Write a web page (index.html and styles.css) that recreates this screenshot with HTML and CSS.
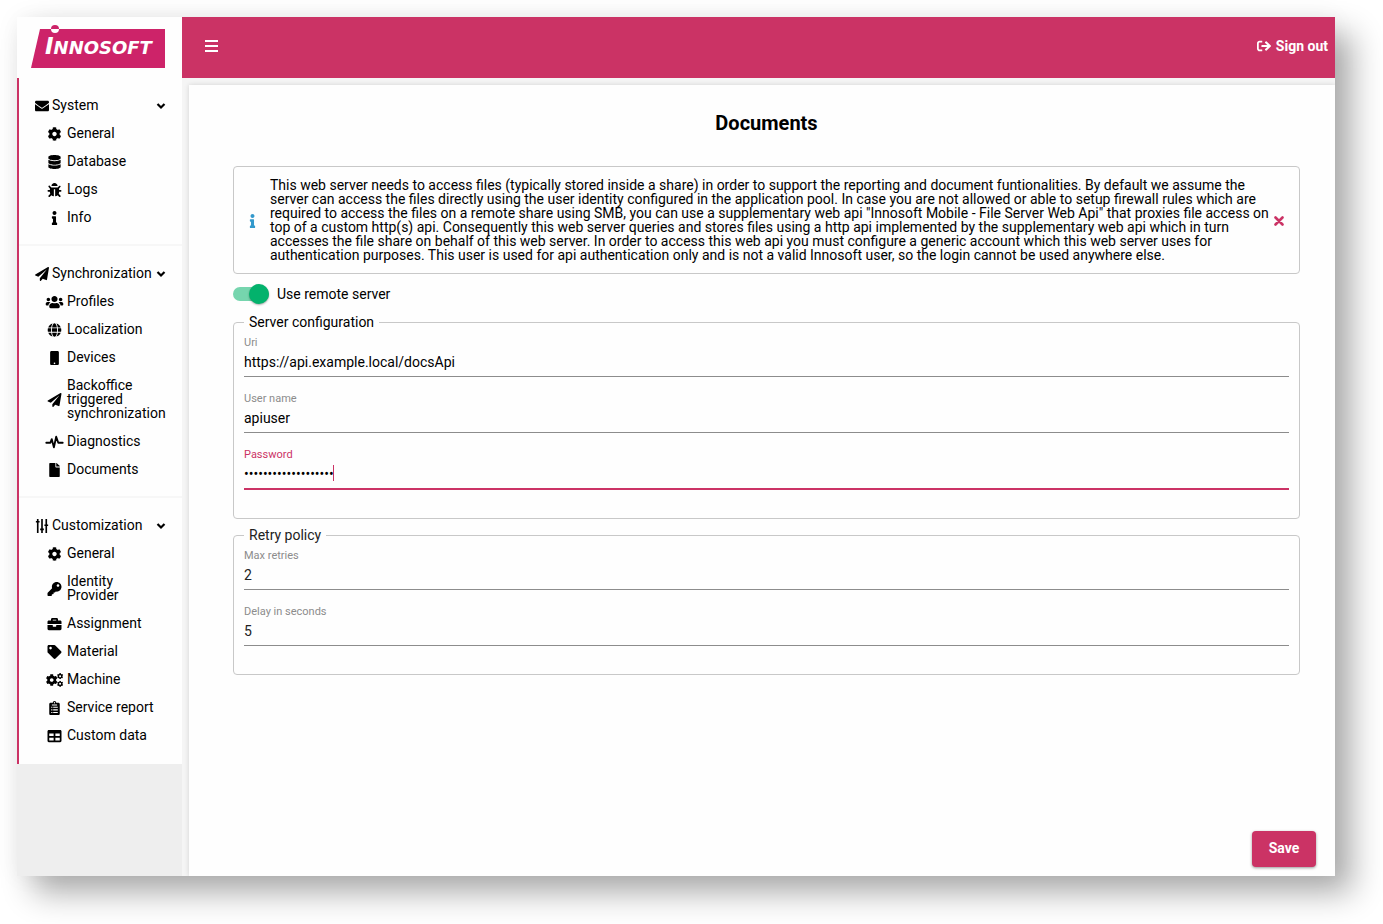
FILE: index.html
```html
<!DOCTYPE html>
<html lang="en">
<head>
<meta charset="utf-8">
<title>Documents</title>
<link rel="stylesheet" href="styles.css">
</head>
<body>
<svg class="sprite" aria-hidden="true">
  <symbol id="envelope" viewBox="0 0 512 512"><path d="M502.300 190.800c3.900-3.100 9.700-.2 9.700 4.700V400c0 26.500-21.500 48-48 48H48c-26.500 0-48-21.500-48-48V195.600c0-5 5.700-7.800 9.700-4.700 22.400 17.400 52.100 39.500 154.100 113.600 21.100 15.400 56.700 47.800 92.200 47.600 35.700.3 72-32.800 92.300-47.600 102-74.100 131.600-96.300 154-113.700zM256 320c23.200.4 56.600-29.200 73.400-41.400 132.700-96.300 142.800-104.700 173.400-128.700 5.800-4.500 9.200-11.500 9.200-18.900v-19c0-26.500-21.500-48-48-48H48c-26.500 0-48 21.500-48 48v19c0 7.400 3.400 14.300 9.200 18.900 30.600 23.900 40.700 32.400 173.400 128.700 16.800 12.200 50.200 41.800 73.400 41.400z"/></symbol>
  <symbol id="cog" viewBox="0 0 512 512"><path d="M487.400 315.700l-42.600-24.600c4.300-23.200 4.300-47 0-70.200l42.600-24.600c4.900-2.800 7.100-8.600 5.500-14-11.100-35.600-30-67.800-54.700-94.600-3.800-4.100-10-5.100-14.800-2.300L380.800 110c-17.900-15.400-38.500-27.300-60.800-35.100V25.800c0-5.600-3.900-10.500-9.400-11.700-36.700-8.200-74.300-7.800-109.200 0-5.500 1.200-9.400 6.100-9.400 11.700V75c-22.200 7.900-42.800 19.800-60.800 35.100L88.700 85.500c-4.900-2.800-11-1.900-14.800 2.300-24.700 26.700-43.600 58.900-54.700 94.600-1.700 5.400.6 11.200 5.500 14L67.300 221c-4.300 23.200-4.300 47 0 70.200l-42.600 24.600c-4.900 2.800-7.100 8.600-5.500 14 11.100 35.600 30 67.800 54.700 94.600 3.800 4.100 10 5.100 14.800 2.300l42.600-24.600c17.900 15.400 38.500 27.300 60.800 35.100v49.200c0 5.600 3.900 10.500 9.400 11.700 36.700 8.200 74.300 7.800 109.200 0 5.500-1.200 9.400-6.100 9.400-11.700v-49.200c22.200-7.900 42.800-19.800 60.800-35.100l42.600 24.600c4.900 2.800 11 1.900 14.800-2.300 24.700-26.700 43.600-58.900 54.700-94.600 1.500-5.500-.7-11.300-5.600-14.100zM256 336c-44.100 0-80-35.900-80-80s35.900-80 80-80 80 35.900 80 80-35.900 80-80 80z"/></symbol>
  <symbol id="database" viewBox="0 0 448 512"><path d="M448 73.100v45.800C448 159.100 347.700 192 224 192S0 159.100 0 118.900V73.100C0 32.900 100.300 0 224 0s224 32.900 224 73.100zM448 176v102.900C448 319.100 347.700 352 224 352S0 319.100 0 278.900V176c48.100 33.100 136.200 48.600 224 48.600S399.900 209.100 448 176zm0 160v102.900C448 479.100 347.700 512 224 512S0 479.100 0 438.900V336c48.100 33.100 136.200 48.600 224 48.600S399.900 369.100 448 336z"/></symbol>
  <symbol id="bug" viewBox="0 0 512 512"><path d="M511.988 288.900c-.478 17.430-15.217 31.100-32.653 31.100H424v16c0 21.864-4.882 42.584-13.600 61.145l60.228 60.228c12.496 12.497 12.496 32.758 0 45.255-12.498 12.497-32.759 12.496-45.256 0l-54.736-54.736C345.886 467.965 314.351 480 280 480V236c0-6.627-5.373-12-12-12h-24c-6.627 0-12 5.373-12 12v244c-34.351 0-65.886-12.035-90.636-32.108l-54.736 54.736c-12.498 12.497-32.759 12.496-45.256 0-12.496-12.497-12.496-32.758 0-45.255l60.228-60.228C92.882 378.584 88 357.864 88 336v-16H32.666C15.230 320 .491 306.330.013 288.900-.484 270.816 14.028 256 32 256h56v-58.745l-46.628-46.628c-12.496-12.497-12.496-32.758 0-45.255 12.498-12.497 32.758-12.497 45.256 0L141.255 160h229.489l54.627-54.627c12.498-12.497 32.758-12.497 45.256 0 12.496 12.497 12.496 32.758 0 45.255L424 197.255V256h56c17.972 0 32.484 14.816 31.988 32.900zM257 0c-61.856 0-112 50.144-112 112h224C369 50.144 318.856 0 257 0z"/></symbol>
  <symbol id="info" viewBox="0 0 192 512"><path d="M20 424.200h20V279.800H20c-11 0-20-9-20-20V212c0-11 9-20 20-20h112c11 0 20 9 20 20v212.200h20c11 0 20 9 20 20V492c0 11-9 20-20 20H20c-11 0-20-9-20-20v-47.800c0-11 9-20 20-20zM96 0C56.200 0 24 32.200 24 72s32.200 72 72 72 72-32.200 72-72S135.800 0 96 0z"/></symbol>
  <symbol id="plane" viewBox="0 0 512 512"><path d="M476 3.200L12.500 270.600c-18.100 10.400-15.800 35.600 2.200 43.200L121 358.400l287.300-253.200c5.500-4.900 13.300 2.600 8.600 8.300L176 407v80.500c0 23.600 28.500 32.900 42.500 15.800L282 426l124.600 52.200c14.200 6 30.400-2.900 33-18.200l72-432C515 7.800 493.300-6.800 476 3.200z"/></symbol>
  <symbol id="users" viewBox="0 0 640 512"><path d="M96 224c35.300 0 64-28.700 64-64s-28.700-64-64-64-64 28.700-64 64 28.700 64 64 64zm448 0c35.300 0 64-28.700 64-64s-28.700-64-64-64-64 28.700-64 64 28.700 64 64 64zm32 32h-64c-17.600 0-33.500 7.100-45.100 18.600 40.300 22.100 68.900 62 75.100 109.400h66c17.700 0 32-14.300 32-32v-32c0-35.300-28.700-64-64-64zm-256 0c61.900 0 112-50.100 112-112S381.900 32 320 32 208 82.100 208 144s50.100 112 112 112zm76.800 32h-8.300c-20.800 10-43.900 16-68.500 16s-47.600-6-68.500-16h-8.300C179.600 288 128 339.600 128 403.200V432c0 26.500 21.500 48 48 48h288c26.500 0 48-21.500 48-48v-28.800c0-63.600-51.600-115.200-115.200-115.200zm-223.700-13.400C161.500 263.100 145.600 256 128 256H64c-35.300 0-64 28.700-64 64v32c0 17.700 14.300 32 32 32h65.900c6.300-47.400 34.900-87.300 75.200-109.400z"/></symbol>
  <symbol id="globe" viewBox="0 0 496 512"><path d="M336.500 160C322 70.700 287.800 8 248 8s-74 62.700-88.500 152h177zM152 256c0 22.200 1.200 43.500 3.300 64h185.300c2.100-20.500 3.300-41.800 3.300-64s-1.200-43.500-3.300-64H155.300c-2.100 20.500-3.300 41.800-3.300 64zm324.700-96c-28.600-67.900-86.500-120.400-158-141.600 24.400 33.800 41.200 84.700 50 141.600h108zM177.200 18.400C105.800 39.600 47.800 92.100 19.300 160h108c8.700-56.900 25.500-107.800 49.900-141.600zM487.400 192H372.700c2.100 21 3.300 42.500 3.300 64s-1.200 43-3.300 64h114.600c5.500-20.500 8.600-41.800 8.600-64s-3.100-43.500-8.500-64zM120 256c0-21.500 1.200-43 3.300-64H8.600C3.200 212.500 0 233.800 0 256s3.200 43.500 8.600 64h114.600c-2-21-3.200-42.500-3.200-64zm39.500 96c14.500 89.300 48.700 152 88.500 152s74-62.700 88.500-152h-177zm159.300 141.600c71.400-21.200 129.400-73.700 158-141.600h-108c-8.800 56.900-25.600 107.800-50 141.600zM19.300 352c28.600 67.900 86.500 120.400 158 141.600-24.400-33.800-41.200-84.700-50-141.600h-108z"/></symbol>
  <symbol id="mobile" viewBox="0 0 320 512"><path d="M272 0H48C21.500 0 0 21.500 0 48v416c0 26.500 21.500 48 48 48h224c26.500 0 48-21.500 48-48V48c0-26.500-21.500-48-48-48zM160 480c-17.700 0-32-14.300-32-32s14.300-32 32-32 32 14.300 32 32-14.300 32-32 32z"/></symbol>
  <symbol id="pulse" viewBox="0 0 640 512"><path d="M20 282h150l50-130 78 300 84-390 76 220h162" fill="none" stroke="currentColor" stroke-width="68" stroke-linejoin="round" stroke-linecap="round"/></symbol>
  <symbol id="file" viewBox="0 0 384 512"><path d="M224 136V0H24C10.700 0 0 10.700 0 24v464c0 13.300 10.700 24 24 24h336c13.300 0 24-10.700 24-24V160H248c-13.200 0-24-10.800-24-24zm160-14.100v6.100H256V0h6.100c6.400 0 12.500 2.500 17 7l97.900 98c4.500 4.500 7 10.600 7 16.900z"/></symbol>
  <symbol id="sliders" viewBox="0 0 448 512"><path d="M38 0h60v72h38v60H98v380H38V132H0V72h38zM194 0h60v348h38v60h-38v104h-60V408h-38v-60h38zM350 0h60v200h38v60h-38v252h-60V260h-38v-60h38z"/></symbol>
  <symbol id="key" viewBox="0 0 512 512"><path d="M512 176.001C512 273.203 433.202 352 336 352c-11.220 0-22.190-1.062-32.827-3.069l-24.012 27.014A23.999 23.999 0 0 1 261.223 384H224v40c0 13.255-10.745 24-24 24h-40v40c0 13.255-10.745 24-24 24H24c-13.255 0-24-10.745-24-24v-78.059c0-6.365 2.529-12.470 7.029-16.971l161.802-161.802C163.108 213.814 160 195.271 160 176 160 78.798 238.797.001 335.999 0 433.488-.001 512 78.511 512 176.001zM336 128c0 26.510 21.490 48 48 48s48-21.490 48-48-21.490-48-48-48-48 21.490-48 48z"/></symbol>
  <symbol id="toolbox" viewBox="0 0 512 512"><path d="M320 336c0 8.840-7.160 16-16 16h-96c-8.840 0-16-7.160-16-16v-48H0v144c0 25.600 22.400 48 48 48h416c25.600 0 48-22.400 48-48V288H320v48zm144-208h-80V80c0-25.600-22.400-48-48-48H176c-25.600 0-48 22.400-48 48v48H48c-25.600 0-48 22.400-48 48v80h512v-80c0-25.600-22.400-48-48-48zm-144 0H192V96h128v32z"/></symbol>
  <symbol id="tag" viewBox="0 0 512 512"><path d="M0 252.118V48C0 21.490 21.490 0 48 0h204.118a48 48 0 0 1 33.941 14.059l211.882 211.882c18.745 18.745 18.745 49.137 0 67.882L293.823 497.941c-18.745 18.745-49.137 18.745-67.882 0L14.059 286.059A48 48 0 0 1 0 252.118zM112 64c-26.510 0-48 21.490-48 48s21.490 48 48 48 48-21.490 48-48-21.490-48-48-48z"/></symbol>
  <symbol id="clipboard" viewBox="0 0 384 512"><path fill-rule="evenodd" d="M336 64h-80a64 64 0 0 0-128 0H48C21 64 0 85 0 112v352c0 27 21 48 48 48h288c27 0 48-21 48-48V112c0-27-21-48-48-48zM192 40a24 24 0 1 1 0 48 24 24 0 0 1 0-48zM96 128h192v32H96zM72 208h44v40H72zm72 0h168v40H144zM72 304h44v40H72zm72 0h168v40H144zM72 400h44v40H72zm72 0h168v40H144z"/></symbol>
  <symbol id="table" viewBox="0 0 512 512"><path d="M464 32H48C21.490 32 0 53.490 0 80v352c0 26.510 21.490 48 48 48h416c26.510 0 48-21.490 48-48V80c0-26.510-21.490-48-48-48zM224 416H64v-96h160v96zm0-160H64v-96h160v96zm224 160H288v-96h160v96zm0-160H288v-96h160v96z"/></symbol>
  <symbol id="cogs" viewBox="0 0 640 512">
    <svg x="0" y="38" width="436" height="436" viewBox="0 0 512 512"><use href="#cog"/></svg>
    <svg x="410" y="0" width="230" height="230" viewBox="0 0 512 512"><use href="#cog"/></svg>
    <svg x="410" y="282" width="230" height="230" viewBox="0 0 512 512"><use href="#cog"/></svg>
  </symbol>
  <symbol id="chevron" viewBox="0 0 10 10"><path d="M1.500 3l3.500 3.500L8.500 3" fill="none" stroke="currentColor" stroke-width="2.200"/></symbol>
  <symbol id="bars" viewBox="0 0 13 12"><path d="M0 0h13v2H0zM0 5h13v2H0zM0 10h13v2H0z"/></symbol>
  <symbol id="signout" viewBox="0 0 512 512"><path d="M180 448H96c-53 0-96-43-96-96V160c0-53 43-96 96-96h84c6.600 0 12 5.400 12 12v40c0 6.600-5.400 12-12 12H96c-17.700 0-32 14.300-32 32v192c0 17.700 14.300 32 32 32h84c6.600 0 12 5.400 12 12v40c0 6.600-5.400 12-12 12zm117.900-303.100l77.600 71.100H184c-13.300 0-24 10.700-24 24v32c0 13.300 10.700 24 24 24h191.500l-77.600 71.100c-10.100 9.200-10.400 25-.8 34.700l21.900 21.900c9.300 9.300 24.500 9.400 33.900.1l152-150.800c9.500-9.400 9.500-24.700 0-34.100L353 88.300c-9.400-9.300-24.500-9.300-33.900.1l-21.900 21.900c-9.700 9.600-9.300 25.400.7 34.600z"/></symbol>
  <symbol id="times" viewBox="0 0 10 10"><path d="M1.500 1.500l7 7M8.500 1.500l-7 7" fill="none" stroke="currentColor" stroke-width="2.600" stroke-linecap="round"/></symbol>
</svg>

<div class="app">
  <aside class="sidebar">
    <div class="brand">
      <svg class="logo" viewBox="0 0 134 43" role="img" aria-label="Innosoft">
        <path class="logo-fill" d="M9 4h125v39H0z"/>
        <circle class="logo-light" cx="24" cy="4" r="4"/>
        <path class="logo-fill" d="M20 4a4 4 0 0 1 8 0z"/>
        <text class="logo-text" x="14" y="29"><tspan class="logo-initial">I</tspan>NNOSOFT</text>
      </svg>
    </div>
    <nav class="menu">
      <section class="group">
        <button class="group-head" type="button"><svg class="icon"><use href="#envelope"/></svg><span class="group-name">System</span><svg class="chevron"><use href="#chevron"/></svg></button>
        <a class="item" href="#"><svg class="icon"><use href="#cog"/></svg><span>General</span></a>
        <a class="item" href="#"><svg class="icon"><use href="#database"/></svg><span>Database</span></a>
        <a class="item" href="#"><svg class="icon"><use href="#bug"/></svg><span>Logs</span></a>
        <a class="item" href="#"><svg class="icon"><use href="#info"/></svg><span>Info</span></a>
      </section>
      <section class="group">
        <button class="group-head" type="button"><svg class="icon"><use href="#plane"/></svg><span class="group-name">Synchronization</span><svg class="chevron"><use href="#chevron"/></svg></button>
        <a class="item" href="#"><svg class="icon"><use href="#users"/></svg><span>Profiles</span></a>
        <a class="item" href="#"><svg class="icon"><use href="#globe"/></svg><span>Localization</span></a>
        <a class="item" href="#"><svg class="icon"><use href="#mobile"/></svg><span>Devices</span></a>
        <a class="item" href="#"><svg class="icon"><use href="#plane"/></svg><span>Backoffice triggered synchronization</span></a>
        <a class="item" href="#"><svg class="icon"><use href="#pulse"/></svg><span>Diagnostics</span></a>
        <a class="item" href="#"><svg class="icon"><use href="#file"/></svg><span>Documents</span></a>
      </section>
      <section class="group">
        <button class="group-head" type="button"><svg class="icon"><use href="#sliders"/></svg><span class="group-name">Customization</span><svg class="chevron"><use href="#chevron"/></svg></button>
        <a class="item" href="#"><svg class="icon"><use href="#cog"/></svg><span>General</span></a>
        <a class="item" href="#"><svg class="icon"><use href="#key"/></svg><span>Identity Provider</span></a>
        <a class="item" href="#"><svg class="icon"><use href="#toolbox"/></svg><span>Assignment</span></a>
        <a class="item" href="#"><svg class="icon"><use href="#tag"/></svg><span>Material</span></a>
        <a class="item" href="#"><svg class="icon"><use href="#cogs"/></svg><span>Machine</span></a>
        <a class="item" href="#"><svg class="icon"><use href="#clipboard"/></svg><span>Service report</span></a>
        <a class="item" href="#"><svg class="icon"><use href="#table"/></svg><span>Custom data</span></a>
      </section>
    </nav>
  </aside>

  <div class="content">
    <header class="topbar">
      <button class="menu-toggle" type="button" aria-label="Toggle menu"><svg class="bars"><use href="#bars"/></svg></button>
      <a class="signout" href="#"><svg class="icon"><use href="#signout"/></svg><span>Sign out</span></a>
    </header>
    <main class="panel">
      <form class="form">
        <h1 class="title">Documents</h1>
        <div class="notice">
          <svg class="icon notice-icon"><use href="#info"/></svg>
          <p class="notice-text">This web server needs to access files (typically stored inside a share) in order to support the reporting and document funtionalities. By default we assume the server can access the files directly using the user identity configured in the application pool. In case you are not allowed or able to setup firewall rules which are required to access the files on a remote share using SMB, you can use a supplementary web api "Innosoft Mobile - File Server Web Api" that proxies file access on top of a custom http(s) api. Consequently this web server queries and stores files using a http api implemented by the supplementary web api which in turn accesses the file share on behalf of this web server. In order to access this web api you must configure a generic account which this web server uses for authentication purposes. This user is used for api authentication only and is not a valid Innosoft user, so the login cannot be used anywhere else.</p>
          <button class="notice-close" type="button" aria-label="Close"><svg class="times"><use href="#times"/></svg></button>
        </div>
        <label class="switch"><input class="switch-input" type="checkbox" role="switch" checked><span>Use remote server</span></label>
        <fieldset class="box">
          <legend class="legend">Server configuration</legend>
          <div class="field"><label class="label" for="uri">Uri</label><input class="input" id="uri" type="text" value="https://api.example.local/docsApi"></div>
          <div class="field"><label class="label" for="user">User name</label><input class="input" id="user" type="text" value="apiuser"></div>
          <div class="field field-active"><label class="label" for="pass">Password</label><input class="input" id="pass" type="password" value="abcdefghijklmnopqrs"><span class="caret"></span></div>
        </fieldset>
        <fieldset class="box box-soft">
          <legend class="legend">Retry policy</legend>
          <div class="field"><label class="label" for="retries">Max retries</label><input class="input" id="retries" type="text" value="2"></div>
          <div class="field"><label class="label" for="delay">Delay in seconds</label><input class="input" id="delay" type="text" value="5"></div>
        </fieldset>
        <div class="actions"><button class="save" type="submit">Save</button></div>
      </form>
    </main>
  </div>
</div>
</body>
</html>
```

FILE: styles.css
```css
:root {
  --brand: #cb3365;
  --line: #c8c8c8;
}

* { box-sizing: border-box; }

body {
  margin: 0;
  min-height: 100vh;
  padding: 17px 48px 48px 17px;
  display: flex;
  background: #fff;
  color: #000;
  font: 14px/14px Roboto, "Liberation Sans", sans-serif;
}

button, input { font: inherit; color: inherit; }

button {
  border: 0;
  padding: 0;
  background: none;
  cursor: pointer;
}

a { color: inherit; text-decoration: none; }
svg { fill: currentColor; flex: none; }

.sprite { position: absolute; width: 0; height: 0; }

.app {
  flex: 1;
  min-width: 0;
  display: flex;
  background: #f5f5f5;
  box-shadow: 0 0 24px rgba(0, 0, 0, .05), 17px 17px 30px rgba(0, 0, 0, .32);
}

/* Sidebar */
.sidebar {
  flex: none;
  width: 165px;
  background: #eee;
}

.brand {
  height: 61px;
  padding: 8px 14px;
  background: #fefefe;
}

.logo { display: block; width: 134px; height: 43px; }
.logo-fill { fill: #cd2369; }
.logo-light { fill: #fff; }
.logo-text {
  fill: #fff;
  font: italic 700 18px "DejaVu Sans", sans-serif;
}
.logo-initial { font-size: 23px; }

.menu {
  border-left: 2px solid var(--brand);
  background: #fefefe;
}

.group {
  padding: 13px 16px;
  border-bottom: 2px solid #f7f7f7;
}
.group:last-child { border-bottom-color: #fefefe; }

.group-head {
  display: flex;
  align-items: center;
  gap: 3px;
  width: 100%;
  height: 28px;
  text-align: left;
}

.group-name { flex: 1; }

.icon { width: 14px; height: 14px; }

/* Glyphs hang slightly below the text's centre line */
.menu .icon,
.chevron,
.notice-icon,
.times { margin: 1px 0 -1px; }

.chevron { width: 10px; height: 10px; }

.item {
  display: flex;
  align-items: center;
  gap: 3px;
  padding: 7px 0 7px 10px;
}
.item .icon { width: 19px; }

/* Top bar */
.content {
  flex: 1;
  min-width: 0;
  display: flex;
  flex-direction: column;
}

.topbar {
  height: 61px;
  padding: 0 7px 3px 23px;
  display: flex;
  align-items: center;
  justify-content: space-between;
  background: var(--brand);
  color: #fff;
}

.menu-toggle { display: flex; }
.bars { width: 13px; height: 12px; }

.signout {
  display: flex;
  align-items: center;
  gap: 5px;
  font-weight: 700;
}

/* Form panel */
.panel {
  flex: 1;
  margin: 7px 0 0 7px;
  display: flex;
  background: #fefefe;
  box-shadow: 0 0 5px rgba(0, 0, 0, .14);
  clip-path: inset(-7px 0 0 -7px);
}

.form {
  flex: 1;
  min-width: 0;
  padding: 26px 35px 9px 44px;
  display: flex;
  flex-direction: column;
}

.title {
  margin: 0 0 31px;
  font-size: 20px;
  line-height: 24px;
  text-align: center;
}

.notice {
  display: flex;
  align-items: center;
  padding: 11px 15px;
  border: 1px solid var(--line);
  border-radius: 4px;
}

.notice-icon { width: 7px; color: #3399cc; }
.notice-text { flex: 1; margin: 0 5px 0 14px; }
.notice-close { display: flex; color: var(--brand); }
.times { width: 10px; height: 10px; }

.switch {
  display: flex;
  align-items: center;
  gap: 8px;
  height: 40px;
}

.switch-input {
  appearance: none;
  position: relative;
  width: 36px;
  height: 14px;
  margin: 0;
  border-radius: 7px;
  background: #76d5ae;
}

.switch-input::before {
  content: "";
  position: absolute;
  top: -3px;
  right: 0;
  width: 20px;
  height: 20px;
  border-radius: 50%;
  background: #03b26c;
  box-shadow: 0 1px 2px rgba(0, 0, 0, .35);
}

.box {
  margin: 0 0 8px;
  padding: 7px 10px 28px;
  border: 1px solid var(--line);
  border-radius: 4px;
  display: grid;
  gap: 16px;
}

.box-soft { color: #222; }

.legend { padding: 0 5px; line-height: 16px; }

.field {
  position: relative;
  display: flex;
  flex-direction: column;
  gap: 3px;
  padding-bottom: 4px;
  border-bottom: 1px solid #8c8c8c;
}

.label { color: #8c8c8c; font-size: 11px; line-height: 12px; }

.input {
  width: 100%;
  height: 20px;
  padding: 0;
  border: 0;
  outline: 0;
  background: none;
}

.field-active { border-bottom: 2px solid var(--brand); }
.field-active .label { color: var(--brand); }

.caret {
  position: absolute;
  top: 16px;
  left: 89px;
  width: 1px;
  height: 16px;
  background: var(--brand);
}

.actions {
  margin: auto -16px 0 0;
  display: flex;
  justify-content: flex-end;
}

.save {
  width: 64px;
  height: 36px;
  padding-bottom: 2px;
  border-radius: 4px;
  background: var(--brand);
  color: #fff;
  font-weight: 700;
  box-shadow: 0 1px 3px rgba(0, 0, 0, .4);
}
```
